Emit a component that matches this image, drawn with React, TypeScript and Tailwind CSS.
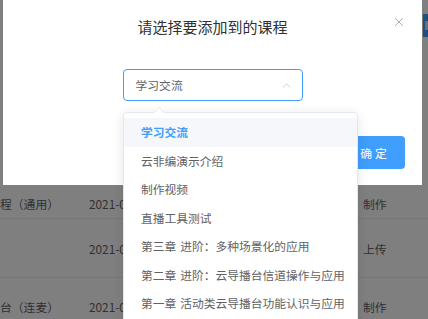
import { X, ChevronUp } from "lucide-react";

const font = { fontFamily: '"Noto Sans CJK SC", "Noto Sans", sans-serif' };

const options = [
  ["学习交流"],
  ["云非编演示介绍"],
  ["制作视频"],
  ["直播工具测试"],
  ["第三章", "进阶：多种场景化的应用"],
  ["第二章", "进阶：云导播台信道操作与应用"],
  ["第一章", "活动类云导播台功能认识与应用"],
];

const rows = [
  { name: "程（通用）", date: "2021-08-12", type: "制作", h: "h-[34px]", pt: "pt-[4px]" },
  { name: "", date: "2021-08-10", type: "上传", h: "h-[59px]", pt: "pt-[1px]" },
  { name: "台（连麦）", date: "2021-08-06", type: "制作", h: "h-[59px]", pt: "pt-0" },
];

export default function App() {
  return (
    <div
      className="relative h-[319px] w-[428px] overflow-hidden bg-white text-[#606266]"
      style={font}
    >
      {/* page behind the dialog */}
      <div className="flex flex-col">
        <div className="flex h-[185px] justify-end pt-[14px]">
          <div className="flex h-[23px] w-[40px] translate-x-[35px] items-center bg-[#409eff] pl-[2px]">
            <span className="h-[9px] w-[3px] bg-white/70" />
          </div>
        </div>
        {rows.map((r, i) => (
          <div
            key={i}
            className={`flex ${r.h} items-center border-b border-[#ebeef5] ${r.pt} text-[11.8px]`}
          >
            <span className="w-[89px] whitespace-nowrap">{r.name}</span>
            <span className="w-[274px] whitespace-nowrap">{r.date}</span>
            <span>{r.type}</span>
          </div>
        ))}
      </div>

      <div className="absolute inset-0 bg-black/50" />

      {/* dialog */}
      <div className="absolute left-[3px] top-0 flex h-[185px] w-[419px] flex-col bg-white">
        <div className="relative flex h-[44px] items-end justify-center pb-[7px]">
          <span className="text-[15px] leading-[20px] text-[#303133]">请选择要添加到的课程</span>
          <X
            className="absolute right-[16px] top-[15px] text-[#909399]"
            size={14}
            strokeWidth={1.3}
          />
        </div>
        <div className="flex justify-center pt-[25px]">
          <div className="flex h-[32px] w-[180px] items-center justify-between rounded-[4px] border border-[#409eff] pl-[12px] pr-[9px] text-[11.8px] text-[#606266]">
            <span>学习交流</span>
            <ChevronUp className="text-[#c0c4cc]" size={13} strokeWidth={1.5} />
          </div>
        </div>
        <div className="flex justify-end pr-[17px] pt-[35px]">
          <div className="flex h-[33px] w-[60px] items-center justify-center rounded-[4px] bg-[#409eff] text-[11.8px] tracking-[3px] text-white">
            确定
          </div>
        </div>
      </div>

      {/* dropdown */}
      <div className="absolute left-[123px] top-[112px] w-[235px] rounded-[4px] border border-[#e4e7ed] bg-white py-[5px] shadow-[0_2px_12px_0_rgba(0,0,0,0.1)]">
        <div className="absolute -top-[6px] left-[29px] h-0 w-0 border-x-[6px] border-b-[6px] border-x-transparent border-b-[#e4e7ed]" />
        <div className="absolute -top-[5px] left-[30px] h-0 w-0 border-x-[5px] border-b-[5px] border-x-transparent border-b-white" />
        {options.map((o, i) => (
          <div
            key={o.join()}
            className={`flex h-[28.5px] items-center gap-[4px] whitespace-nowrap px-[17px] text-[11.75px] ${
              i === 0 ? "bg-[#f5f7fa] font-bold text-[#409eff]" : "text-[#606266]"
            }`}
          >
            {o.map((part) => (
              <span key={part}>{part}</span>
            ))}
          </div>
        ))}
      </div>
    </div>
  );
}
